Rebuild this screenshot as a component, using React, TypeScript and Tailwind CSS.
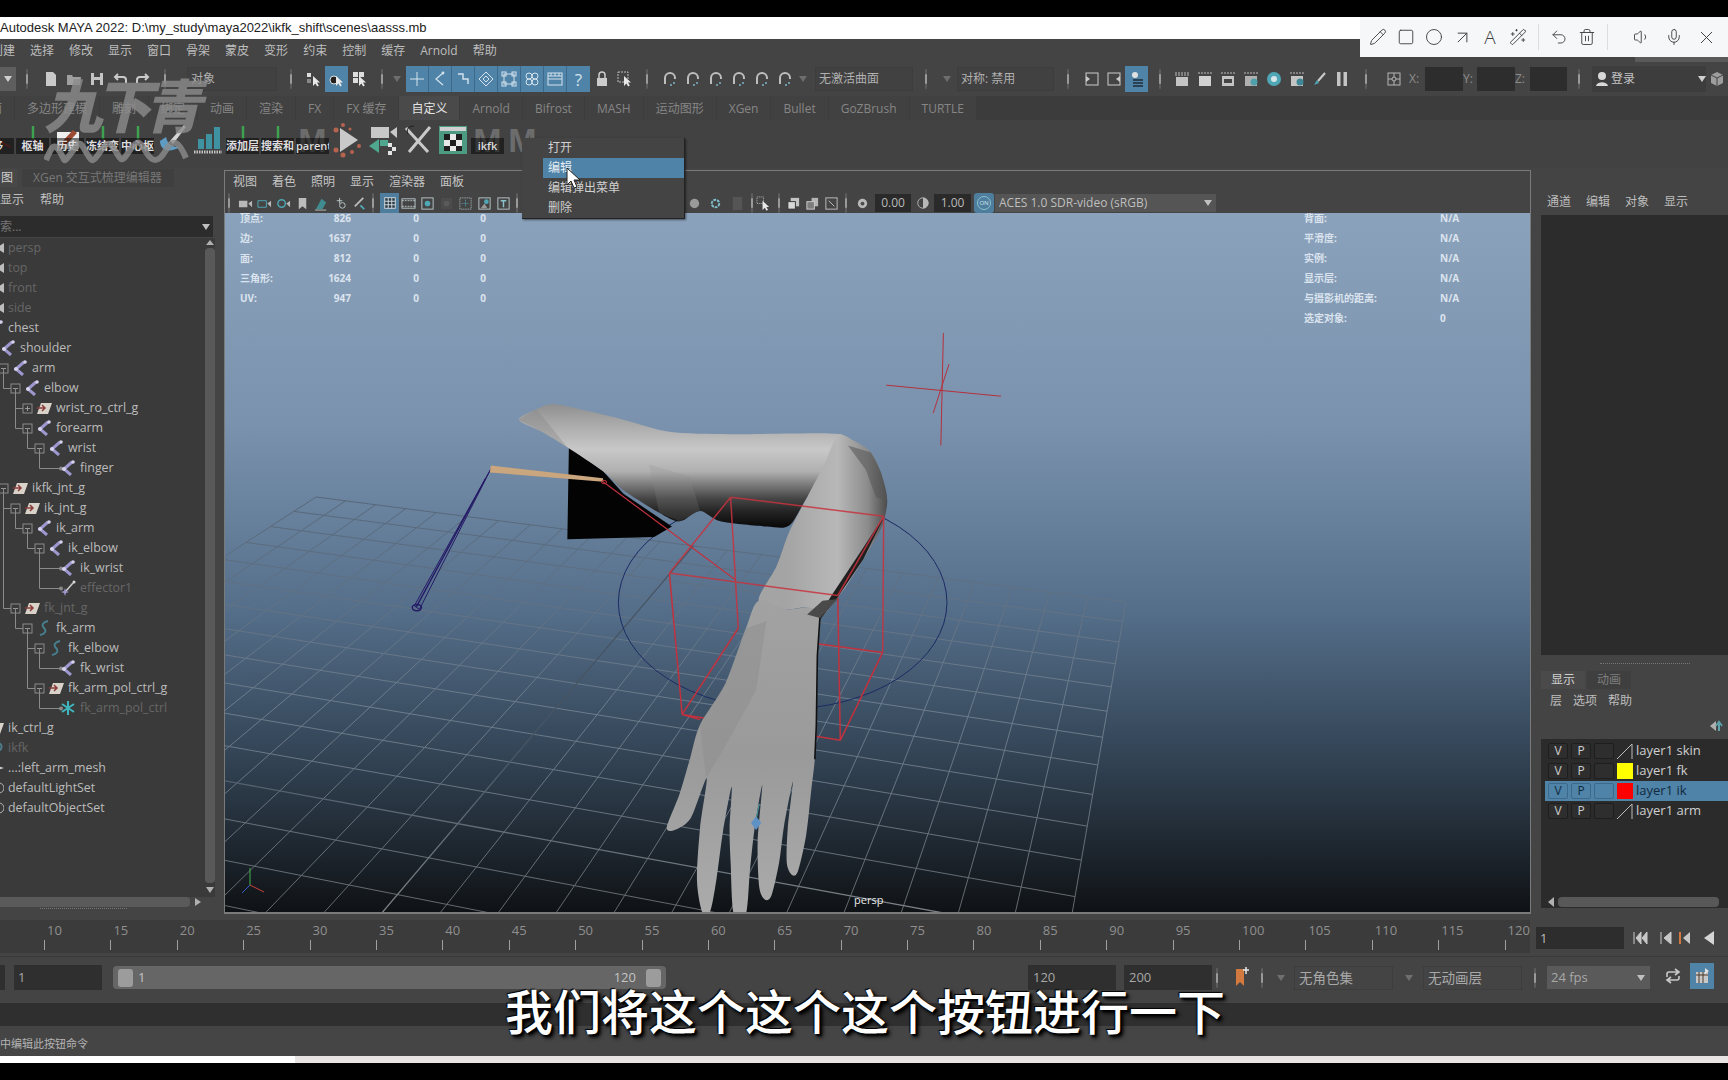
import type { ReactNode } from "react";
import { ArrowUpRight, Circle, Mic, Pencil, Square, Trash2, Undo2, Volume1, WandSparkles, X } from "lucide-react";

// small svg wrapper, every toolbar glyph is 16x16
function Ic({ children, s = 16 }: { children: ReactNode; s?: number }) {
  return (
    <svg width={s} height={s} viewBox="0 0 16 16" fill="none" className="shrink-0">
      {children}
    </svg>
  );
}

function Sep() {
  return (
    <div className="w-[2px] h-[20px] shrink-0 flex items-center justify-center bg-[#5c5c5c] rounded-full">
      <div className="w-[2px] h-[10px] bg-[#9a9a9a] rounded-full" />
    </div>
  );
}

function Caret({ c = "#8a8a8a" }: { c?: string }) {
  return (
    <svg width="8" height="6" viewBox="0 0 8 6" className="shrink-0">
      <path d="M0 0h8L4 6z" fill={c} />
    </svg>
  );
}

const arrow = <path d="M7 5v10l2.4-2.4 1.8 3 1.6-1-1.8-3H14z" fill="#e8e8e8" />;

const sel1 = <Ic><rect x="1" y="2" width="4" height="4" fill="#ddd" /><rect x="1" y="8" width="4" height="4" fill="#888" />{arrow}</Ic>;
const sel2 = <Ic><circle cx="5" cy="9" r="4" fill="#222" stroke="#ddd" />{arrow}</Ic>;
const sel3 = <Ic><rect x="1" y="1" width="5" height="5" fill="#ddd" /><rect x="7" y="1" width="5" height="5" fill="#ddd" /><rect x="1" y="7" width="5" height="5" fill="#ddd" />{arrow}</Ic>;
const magnet = (
  <Ic>
    <path d="M3 13V7a5 5 0 0 1 10 0v1" stroke="#bdbdbd" strokeWidth="2" />
    <circle cx="12" cy="12" r="1" fill="#7fb6c8" />
    <circle cx="9" cy="14" r="1" fill="#7fb6c8" />
  </Ic>
);
const clap = (
  <Ic>
    <path d="M1 2h14M1 4h14" stroke="#bbb" strokeDasharray="2 1" />
    <rect x="2" y="6" width="12" height="9" fill="#c4c4c4" />
  </Ic>
);

function Cell({ children, w = "w-[23px]", on }: { children?: ReactNode; w?: string; on?: boolean }) {
  return (
    <div className={`${w} h-[26px] shrink-0 flex items-center justify-center ${on ? "bg-[#4f83a8]" : ""}`}>
      {children}
    </div>
  );
}

function Combo({ t, w }: { t: string; w: string }) {
  return (
    <div className={`${w} h-[24px] shrink-0 flex items-center pl-[3px] text-[12px] text-[#b0b0b0] border border-[#3d3d3d] bg-[#414141]`}>
      {t}
    </div>
  );
}

function MainToolbar() {
  const lineIc = "#d5e4ee";
  return (
    <div className="h-[34px] bg-[#444444] flex items-center">
      <div className="w-[16px] h-[24px] shrink-0 bg-[#5e5e5e] flex items-center justify-center"><Caret c="#cfcfcf" /></div>
      <div className="ml-[10px]"><Sep /></div>
      <div className="ml-[11px] flex">
        <Cell><Ic><path d="M3 1h7l3 3v11H3z" fill="#c9c9c9" /></Ic></Cell>
        <Cell><Ic><path d="M1 4h5l1 2h8l-1 8H1z" fill="#9f9f9f" /></Ic></Cell>
        <Cell><Ic><path d="M2 2h12v12H2z" fill="#c4c4c4" /><rect x="5" y="2" width="6" height="4" fill="#444" /><rect x="5" y="9" width="6" height="5" fill="#444" /></Ic></Cell>
        <Cell><Ic><path d="M14 12V9a3 3 0 0 0-3-3H3M6 3L3 6l3 3" stroke="#c9c9c9" strokeWidth="2" /></Ic></Cell>
        <Cell><Ic><path d="M2 12V9a3 3 0 0 1 3-3h8M10 3l3 3-3 3" stroke="#c9c9c9" strokeWidth="2" /></Ic></Cell>
      </div>
      <div className="ml-[10px]"><Sep /></div>
      <div className="ml-[21px]"><Combo t="对象" w="w-[90px]" /></div>
      <div className="ml-[13px]"><Sep /></div>
      <div className="ml-[10px] flex">
        <Cell>{sel1}</Cell>
        <Cell on>{sel2}</Cell>
        <Cell>{sel3}</Cell>
      </div>
      <div className="ml-[10px]"><Sep /></div>
      <div className="ml-[10px]"><Caret c="#6d6d6d" /></div>
      <div className="ml-[5px] flex w-[184px] bg-[#4f83a8] divide-x divide-[#3d6a8a]">
        <Cell><Ic><path d="M8 1v14M1 8h14" stroke={lineIc} /></Ic></Cell>
        <Cell><Ic><path d="M11 2L4 8l7 6" stroke={lineIc} strokeWidth="1.2" /><circle cx="11" cy="2" r="1.4" fill={lineIc} /></Ic></Cell>
        <Cell><Ic><path d="M3 3h5v5h5v5" stroke={lineIc} strokeWidth="1.4" /></Ic></Cell>
        <Cell><Ic><path d="M8 1l7 7-7 7-7-7z M8 5l3 3-3 3-3-3z" stroke={lineIc} /></Ic></Cell>
        <Cell><Ic><rect x="3" y="3" width="10" height="10" stroke={lineIc} /><rect x="1" y="1" width="4" height="4" stroke={lineIc} /><rect x="11" y="1" width="4" height="4" stroke={lineIc} /><rect x="1" y="11" width="4" height="4" stroke={lineIc} /><rect x="11" y="11" width="4" height="4" stroke={lineIc} /></Ic></Cell>
        <Cell><Ic><circle cx="5" cy="5" r="3" stroke={lineIc} /><circle cx="11" cy="5" r="3" stroke={lineIc} /><circle cx="5" cy="11" r="3" stroke={lineIc} /><circle cx="11" cy="11" r="3" stroke={lineIc} /></Ic></Cell>
        <Cell><Ic><rect x="1" y="2" width="14" height="12" stroke={lineIc} /><path d="M1 5h14M1 8h14M4 2v3M8 2v3M12 2v3" stroke={lineIc} /></Ic></Cell>
        <Cell><span className="text-[17px] leading-none text-[#d5e4ee]">?</span></Cell>
      </div>
      <Cell><Ic><path d="M5 7V4a3 3 0 0 1 6 0v3" stroke="#ccc" strokeWidth="1.5" /><rect x="3" y="7" width="10" height="8" fill="#ccc" /></Ic></Cell>
      <Cell><Ic><rect x="1" y="1" width="10" height="10" stroke="#bbb" strokeDasharray="2 1" />{arrow}</Ic></Cell>
      <div className="ml-[10px]"><Sep /></div>
      <div className="ml-[10px] flex">
        <Cell>{magnet}</Cell><Cell>{magnet}</Cell><Cell>{magnet}</Cell><Cell>{magnet}</Cell><Cell>{magnet}</Cell><Cell>{magnet}</Cell>
      </div>
      <div className="ml-[3px]"><Caret c="#6d6d6d" /></div>
      <div className="ml-[8px]"><Combo t="无激活曲面" w="w-[98px]" /></div>
      <div className="ml-[12px]"><Sep /></div>
      <div className="ml-[16px]"><Caret c="#6d6d6d" /></div>
      <div className="ml-[6px]"><Combo t="对称: 禁用" w="w-[97px]" /></div>
      <div className="ml-[13px]"><Sep /></div>
      <div className="ml-[12px] flex">
        <Cell w="w-[22px]"><Ic><rect x="2" y="2" width="12" height="12" stroke="#ccc" /><path d="M2 5l4 3-4 3z" fill="#ccc" /></Ic></Cell>
        <Cell w="w-[22px]"><Ic><rect x="2" y="2" width="12" height="12" stroke="#ccc" /><path d="M14 5l-4 3 4 3z" fill="#ccc" /></Ic></Cell>
        <Cell on><Ic><circle cx="6" cy="4" r="3" fill="#e0e0e0" /><path d="M4 9h10M4 12h10M4 15h10" stroke="#1e2c36" strokeWidth="1.5" /></Ic></Cell>
      </div>
      <div className="ml-[11px]"><Sep /></div>
      <div className="ml-[9px] flex">
        <Cell>{clap}</Cell>
        <Cell><Ic><path d="M1 2h14" stroke="#bbb" strokeDasharray="2 1" /><rect x="2" y="5" width="12" height="10" fill="#d0d0d0" /></Ic></Cell>
        <Cell><Ic><path d="M1 2h14" stroke="#bbb" strokeDasharray="2 1" /><rect x="2" y="5" width="12" height="10" fill="#c4c4c4" /><rect x="4" y="8" width="8" height="4" fill="#444" /></Ic></Cell>
        <Cell><Ic><path d="M1 2h14" stroke="#bbb" strokeDasharray="2 1" /><rect x="2" y="5" width="12" height="10" fill="#b0b0b0" /><circle cx="11" cy="11" r="3.5" fill="#4fa0ab" /></Ic></Cell>
        <Cell><Ic><circle cx="8" cy="8" r="7" fill="#4fa7b5" /><circle cx="8" cy="8" r="3" fill="#d7e6ea" /></Ic></Cell>
        <Cell><Ic><path d="M1 2h14" stroke="#bbb" strokeDasharray="2 1" /><rect x="2" y="5" width="12" height="10" fill="#c4c4c4" /><circle cx="11" cy="11" r="3.5" fill="#3f8796" /></Ic></Cell>
        <Cell><Ic><path d="M13 2L6 10" stroke="#ccc" strokeWidth="2" /><path d="M5 9l-3 5 5-2z" fill="#4fa7b5" /></Ic></Cell>
        <Cell w="w-[22px]"><Ic><rect x="3" y="1" width="3.5" height="14" fill="#c4c4c4" /><rect x="9.5" y="1" width="3.5" height="14" fill="#c4c4c4" /></Ic></Cell>
      </div>
      <div className="ml-[12px]"><Sep /></div>
      <div className="ml-[16px]">
        <Cell w="w-[22px]"><Ic><rect x="2" y="2" width="12" height="12" stroke="#b5b5b5" /><path d="M8 2v12M2 8h12" stroke="#b5b5b5" /><circle cx="8" cy="8" r="2" fill="#444" stroke="#b5b5b5" /></Ic></Cell>
      </div>
      <div className="ml-[4px] w-[16px] shrink-0 text-[12px] text-[#8c8c8c]">X:</div>
      <div className="w-[38px] h-[24px] shrink-0 bg-[#2d2d2d]" />
      <div className="w-[14px] shrink-0 text-[12px] text-[#8c8c8c]">Y:</div>
      <div className="w-[38px] h-[24px] shrink-0 bg-[#2d2d2d]" />
      <div className="w-[15px] shrink-0 text-[12px] text-[#8c8c8c]">Z:</div>
      <div className="w-[37px] h-[24px] shrink-0 bg-[#2d2d2d]" />
      <div className="ml-[11px]"><Sep /></div>
      <div className="ml-[12px] w-[114px] h-[26px] shrink-0 bg-[#3d3d3d] flex items-center pl-[2px] gap-[1px] text-[12px] text-[#c4c4c4]">
        <Ic><circle cx="8" cy="5" r="4" fill="#d8d8d8" /><path d="M2 15c1-5 11-5 12 0z" fill="#d8d8d8" /></Ic>
        登录
        <div className="ml-auto"><Caret c="#d0d0d0" /></div>
      </div>
      <div className="w-[22px] shrink-0 flex items-center justify-center">
        <Ic><path d="M8 1l6 3v8l-6 3-6-3V4z" fill="#9d9d9d" /><path d="M8 7v8M2 4l6 3 6-3" stroke="#444" /></Ic>
      </div>
    </div>
  );
}

const TABS = ["曲面", "多边形建模", "雕刻", "绑定", "动画", "渲染", "FX", "FX 缓存", "自定义", "Arnold", "Bifrost", "MASH", "运动图形", "XGen", "Bullet", "GoZBrush", "TURTLE"];

function ShelfTabs() {
  return (
    <div className="h-[24px] bg-[#3c3c3c] flex gap-px overflow-hidden text-[12px]">
      <div className="flex gap-px -ml-[34px]">
        {TABS.map((t) => (
          <div
            key={t}
            className={`px-[12px] pt-[2px] flex items-center whitespace-nowrap ${t === "自定义" ? "bg-[#4a4a4a] text-[#e2e2e2]" : "bg-[#414141] text-[#868686]"}`}
          >
            {t}
          </div>
        ))}
      </div>
    </div>
  );
}

const gizmo = (
  <svg width="32" height="30" viewBox="0 0 32 30">
    <path d="M16 1v14" stroke="#3ea24e" strokeWidth="2.5" />
    <path d="M16 15L4 22" stroke="#3a3f9a" strokeWidth="1.5" />
    <path d="M16 15l12 7" stroke="#a33030" strokeWidth="1.5" />
  </svg>
);

const mLetter = <span className="text-[34px] leading-none font-bold text-[#6c6c6c] [font-family:'Liberation_Sans',sans-serif]">M</span>;

const SHELF: { label?: string; icon: ReactNode }[] = [
  { label: "移", icon: gizmo },
  { label: "枢轴", icon: gizmo },
  {
    label: "历史",
    icon: (
      <svg width="24" height="24" viewBox="0 0 24 24">
        <rect x="1" y="4" width="22" height="17" fill="#efefef" />
        <path d="M17 2l4 3-12 13-5 2 1-5z" fill="#9c4a33" />
      </svg>
    ),
  },
  { label: "冻结变换", icon: gizmo },
  { label: "中心枢轴", icon: gizmo },
  {
    icon: (
      <svg width="30" height="34" viewBox="0 0 30 34">
        <path d="M2 18c0 10 10 12 20 6-8 0-12-2-14-10z" fill="#5f9cc4" />
        <path d="M26 2L12 18l3 3L28 4z" fill="#d6d6d6" />
      </svg>
    ),
  },
  {
    icon: (
      <svg width="28" height="30" viewBox="0 0 28 30">
        <rect x="4" y="14" width="6" height="10" fill="#3f93a0" />
        <rect x="12" y="9" width="6" height="15" fill="#3f93a0" />
        <rect x="20" y="2" width="6" height="22" fill="#3f93a0" />
        <path d="M0 27h28" stroke="#c4c4c4" strokeWidth="3" strokeDasharray="1.5 1" />
      </svg>
    ),
  },
  { label: "添加层次", icon: gizmo },
  { label: "搜索和替", icon: gizmo },
  { label: "parent", icon: mLetter },
  {
    icon: (
      <svg width="32" height="36" viewBox="0 0 32 36">
        <path d="M8 6l18 12L8 30z" fill="#c9c9c9" />
        <g fill="#b5634e">
          <circle cx="4" cy="8" r="2.5" /><circle cx="11" cy="3" r="2" /><circle cx="18" cy="7" r="1.5" /><circle cx="4" cy="28" r="2.5" /><circle cx="11" cy="33" r="2.5" /><circle cx="20" cy="30" r="2" /><circle cx="27" cy="24" r="2" />
        </g>
      </svg>
    ),
  },
  {
    icon: (
      <svg width="32" height="32" viewBox="0 0 32 32">
        <rect x="4" y="3" width="18" height="11" fill="#c8c8c8" />
        <path d="M23 8l7-5v11z" fill="#c8c8c8" />
        <path d="M2 22l10-7v14z" fill="#4fa78f" />
        <rect x="13" y="16" width="8" height="6" fill="#4fa78f" />
        <path d="M21 19h4v4h-4zM25 23h4v4h-4zM21 27h4v4h-4z" fill="#e4e4e4" />
      </svg>
    ),
  },
  {
    icon: (
      <svg width="32" height="32" viewBox="0 0 32 32">
        <path d="M28 3L7 28M4 4l22 24" stroke="#c9c9c9" strokeWidth="3" />
        <path d="M12 2c-6 0-8 4-6 8" stroke="#1e1e1e" fill="none" />
      </svg>
    ),
  },
  {
    icon: (
      <svg width="28" height="28" viewBox="0 0 28 28">
        <rect width="28" height="28" fill="#4d9a83" />
        <rect x="1" y="1" width="26" height="4" fill="#d0d0d0" />
        <rect x="5" y="8" width="18" height="17" fill="#e8e8e8" />
        <path d="M5 8h6v6H5zM17 8h6v6h-6zM11 14h6v6h-6zM5 20h6v5H5zM17 20h6v5h-6z" fill="#1e1e1e" />
      </svg>
    ),
  },
  { label: "ikfk", icon: mLetter },
  { icon: mLetter },
];

function Shelf() {
  return (
    <div className="h-[48px] bg-[#424242] flex overflow-hidden relative">
      <div className="flex -ml-[20px]">
        {SHELF.map((s, i) => (
          <div key={i} className="w-[35px] h-full shrink-0 relative flex justify-center pt-[3px]">
            <div className="h-[34px] flex items-center justify-center">{s.icon}</div>
            {s.label && (
              <div className={`absolute left-[1px] right-[1px] top-[18px] h-[16px] bg-[#000000]/50 overflow-hidden text-[11px] leading-[16px] text-[#dddddd] whitespace-nowrap font-semibold ${s.label.length > 2 && s.label !== "ikfk" ? "text-left" : "text-center"}`}>
                {s.label}
              </div>
            )}
          </div>
        ))}
      </div>
    </div>
  );
}

// outliner -----------------------------------------------------------------
type Kind = "cam" | "joint" | "group" | "eff" | "curve" | "star" | "q" | "mesh" | "set";
type Node = { t: string; d: number; k: Kind; dim?: boolean; plus?: boolean };

const TREE: Node[] = [
  { t: "persp", d: 0, k: "cam", dim: true },
  { t: "top", d: 0, k: "cam", dim: true },
  { t: "front", d: 0, k: "cam", dim: true },
  { t: "side", d: 0, k: "cam", dim: true },
  { t: "chest", d: 0, k: "joint" },
  { t: "shoulder", d: 1, k: "joint" },
  { t: "arm", d: 2, k: "joint" },
  { t: "elbow", d: 3, k: "joint" },
  { t: "wrist_ro_ctrl_g", d: 4, k: "group", plus: true },
  { t: "forearm", d: 4, k: "joint" },
  { t: "wrist", d: 5, k: "joint" },
  { t: "finger", d: 6, k: "joint" },
  { t: "ikfk_jnt_g", d: 2, k: "group" },
  { t: "ik_jnt_g", d: 3, k: "group" },
  { t: "ik_arm", d: 4, k: "joint" },
  { t: "ik_elbow", d: 5, k: "joint" },
  { t: "ik_wrist", d: 6, k: "joint" },
  { t: "effector1", d: 6, k: "eff", dim: true },
  { t: "fk_jnt_g", d: 3, k: "group", dim: true },
  { t: "fk_arm", d: 4, k: "curve" },
  { t: "fk_elbow", d: 5, k: "curve" },
  { t: "fk_wrist", d: 6, k: "joint" },
  { t: "fk_arm_pol_ctrl_g", d: 5, k: "group" },
  { t: "fk_arm_pol_ctrl", d: 6, k: "star", dim: true },
  { t: "ik_ctrl_g", d: 0, k: "group" },
  { t: "ikfk", d: 0, k: "q", dim: true },
  { t: "...:left_arm_mesh", d: 0, k: "mesh" },
  { t: "defaultLightSet", d: 0, k: "set" },
  { t: "defaultObjectSet", d: 0, k: "set" },
];

function TreeIcon({ k }: { k: Kind }) {
  switch (k) {
    case "cam":
      return <path d="M8 8l8-5v10z" fill="#bdbdbd" />;
    case "joint":
      return (
        <g>
          <path d="M12 2L4 9l7 6" stroke="#9d97cf" strokeWidth="3" />
          <circle cx="13" cy="2" r="1.8" fill="#d6d3ec" />
          <circle cx="4" cy="9" r="2" fill="#d6d3ec" />
        </g>
      );
    case "group":
      return (
        <g>
          <path d="M5 3h11l-4 11H1z" fill="#d9d2c8" />
          <path d="M1 8h8M6 5l3 3-3 3" stroke="#8a3d3d" strokeWidth="1.5" />
        </g>
      );
    case "eff":
      return (
        <g>
          <path d="M13 3L6 11" stroke="#cfcfcf" strokeWidth="1.5" />
          <circle cx="14" cy="2" r="1.5" fill="#ddd" />
          <path d="M5 8l1 3 3 1-3 1-1 3-1-3-3-1 3-1z" fill="#9d97cf" />
        </g>
      );
    case "curve":
      return <path d="M12 1c-5 1-7 4-4 7s1 6-4 7" stroke="#46808f" strokeWidth="1.8" />;
    case "star":
      return <path d="M8 1v14M2 4l12 8M14 4L2 12" stroke="#3db6bd" strokeWidth="2" />;
    case "q":
      return <path d="M11 3c4 2 3 7-1 8" stroke="#4d7d8d" strokeWidth="2" />;
    case "mesh":
      return <path d="M10 6l6 2-6 2z" fill="#d0d0d0" />;
    case "set":
      return <circle cx="11" cy="8" r="5" stroke="#b5b5b5" />;
  }
}

const textX = (d: number) => 8 + 12 * d;
const expX = (d: number) => textX(d) - 29;
const rowY = (i: number) => i * 20 + 10;

// tree guide lines and the +/- boxes all live in one drawing
function TreeLines() {
  const parts: ReactNode[] = [];
  TREE.forEach((n, i) => {
    const hasKids = TREE[i + 1] && TREE[i + 1].d > n.d;
    const y = rowY(i);
    if (n.d > 0) {
      let p = i - 1;
      while (p >= 0 && TREE[p].d !== n.d - 1) p--;
      const px = expX(n.d - 1) + 0.5;
      parts.push(<path key={`l${i}`} d={`M${px} ${rowY(p)}V${y + 0.5}H${hasKids || n.plus ? expX(n.d) : expX(n.d) + 9}`} stroke="#8a8a8a" />);
    }
    if (n.d > 0 && !hasKids && !n.plus) {
      parts.push(<circle key={`d${i}`} cx={expX(n.d) + 10} cy={y + 0.5} r="2" fill="#8a8a8a" />);
    }
    if (hasKids || n.plus) {
      const ex = expX(n.d);
      parts.push(
        <g key={`b${i}`}>
          <rect x={ex - 4} y={y - 4} width="9" height="9" fill="#3a3a3a" stroke="#8a8a8a" />
          <path d={`M${ex - 2} ${y + 0.5}h5`} stroke="#9a9a9a" />
          {n.plus && <path d={`M${ex + 0.5} ${y - 2}v5`} stroke="#9a9a9a" />}
        </g>
      );
    }
  });
  return (
    <svg className="absolute left-0 top-0" width="110" height="600" fill="none">
      {parts}
    </svg>
  );
}

function Outliner() {
  return (
    <div className="w-[222px] shrink-0 flex flex-col">
      <div className="h-[18px] mt-[1px] flex items-end text-[12px]">
        <div className="w-[17px] h-[18px] bg-[#484848] text-[#cfcfcf] leading-[18px] pl-[1px]">图</div>
        <div className="ml-[5px] w-[152px] h-[18px] bg-[#3f3f3f] text-[#777777] leading-[18px] pl-[11px]">XGen 交互式梳理编辑器</div>
      </div>
      <div className="h-[29px] pb-[3px] flex items-center gap-[16px] text-[12px] text-[#c0c0c0]">
        <span>显示</span>
        <span>帮助</span>
      </div>
      <div className="h-[21px] w-[213px] bg-[#2c2c2c] flex items-center justify-between pr-[3px] text-[12px] text-[#777777]">
        <span>索...</span>
        <Caret c="#c0c0c0" />
      </div>
      <div className="h-[1px]" />
      <div className="h-[659px] flex">
        <div className="relative w-[205px] bg-[#3a3a3a] overflow-hidden text-[12.4px]">
          <TreeLines />
          {TREE.map((n) => (
            <div key={n.t} className="h-[20px] flex items-center relative" style={{ marginLeft: textX(n.d) - 20 }}>
              <Ic><TreeIcon k={n.k} /></Ic>
              <span className={`ml-[4px] whitespace-nowrap ${n.dim ? "text-[#666666]" : "text-[#bcbcbc]"}`}>{n.t}</span>
            </div>
          ))}
        </div>
        <div className="w-[10px] h-[659px] bg-[#3a3a3a] flex flex-col items-center">
          <svg width="10" height="10" viewBox="0 0 10 10" className="shrink-0"><path d="M5 2l4 5H1z" fill="#b0b0b0" /></svg>
          <div className="flex-1 w-[10px] bg-[#595959] rounded-[4px]" />
          <svg width="10" height="14" viewBox="0 0 10 14" className="shrink-0"><path d="M5 10L1 4h8z" fill="#b0b0b0" /></svg>
        </div>
      </div>
      <div className="h-[10px] w-[215px] flex items-center">
        <div className="w-[190px] h-[10px] bg-[#5a5a5a] rounded-r-[4px]" />
        <svg width="10" height="10" viewBox="0 0 10 10" className="ml-[3px]"><path d="M2 1l6 4-6 4z" fill="#b0b0b0" /></svg>
      </div>
      <div className="ml-[40px] mt-[1px] w-[87px] border-t border-dotted border-[#777777]" />
    </div>
  );
}

// viewport -------------------------------------------------------------------
function homography(p: number[][]) {
  const [[x0, y0], [x1, y1], [x2, y2], [x3, y3]] = p;
  const dx1 = x1 - x2, dx2 = x3 - x2, dy1 = y1 - y2, dy2 = y3 - y2;
  const sx = x0 - x1 + x2 - x3, sy = y0 - y1 + y2 - y3;
  const den = dx1 * dy2 - dx2 * dy1;
  const g = (sx * dy2 - dx2 * sy) / den;
  const h = (dx1 * sy - sx * dy1) / den;
  const a = x1 - x0 + g * x1, b = x3 - x0 + h * x3;
  const d = y1 - y0 + g * y1, e = y3 - y0 + h * y3;
  return (u: number, v: number) => {
    const w = g * u + h * v + 1;
    return `${((a * u + b * v + x0) / w).toFixed(1)} ${((d * u + e * v + y0) / w).toFixed(1)}`;
  };
}

const P = homography([[317, 497], [1127, 602], [909, 1862], [-860, 1261]]);
const N = 24;
let gridD = "";
for (let i = 0; i <= N; i++) {
  if (i === N / 2) continue;
  const t = i / N;
  gridD += `M${P(t, 0)}L${P(t, 1)}M${P(0, t)}L${P(1, t)}`;
}
const axisD = `M${P(0.5, 0)}L${P(0.5, 1)}M${P(0, 0.5)}L${P(1, 0.5)}`;

// catmull-rom through the outline points, closes the shape
function smooth(pts: number[][]) {
  const n = pts.length;
  let d = `M${pts[0][0]} ${pts[0][1]}`;
  for (let i = 0; i < n; i++) {
    const p0 = pts[(i - 1 + n) % n], p1 = pts[i], p2 = pts[(i + 1) % n], p3 = pts[(i + 2) % n];
    const k = 0.14;
    d += `C${p1[0] + (p2[0] - p0[0]) * k} ${p1[1] + (p2[1] - p0[1]) * k} ${p2[0] - (p3[0] - p1[0]) * k} ${p2[1] - (p3[1] - p1[1]) * k} ${p2[0]} ${p2[1]}`;
  }
  return d + "Z";
}

const upperArm = smooth([[235, 115], [270, 85], [305, 70], [370, 90], [440, 115], [530, 150], [650, 157], [840, 155], [870, 165], [860, 210], [800, 340], [765, 422], [720, 425], [630, 410], [590, 380], [550, 410], [510, 385], [440, 320], [400, 265], [330, 195], [280, 150]]);
const elbow = smooth([[860, 160], [890, 175], [925, 210], [945, 270], [957, 350], [945, 430], [910, 520], [880, 590], [860, 630], [825, 690], [800, 660], [760, 665], [705, 640], [740, 540], [765, 440], [800, 340], [835, 240]]);
const forearm = smooth([[825, 690], [820, 800], [818, 1000], [815, 1100], [808, 1190], [798, 1320], [782, 1425], [770, 1435], [760, 1400], [762, 1300], [772, 1165], [755, 1290], [745, 1400], [730, 1495], [717, 1507], [706, 1470], [703, 1340], [712, 1175], [697, 1300], [688, 1420], [680, 1548], [656, 1548], [650, 1400], [648, 1300], [652, 1180], [635, 1310], [622, 1450], [610, 1540], [594, 1542], [584, 1450], [590, 1300], [603, 1155], [572, 1270], [540, 1305], [525, 1297], [550, 1200], [570, 1100], [590, 1000], [640, 880], [680, 720], [705, 640], [760, 665], [805, 660]]);

function Scene() {
  return (
    <svg className="absolute inset-0" width="1304" height="699" viewBox="226 213 1304 699" fill="none">
      <defs>
        <linearGradient id="gl" gradientUnits="userSpaceOnUse" x1="0" y1="500" x2="0" y2="912">
          <stop offset="0" stopColor="#566779" />
          <stop offset="0.5" stopColor="#6c7c8c" />
          <stop offset="1" stopColor="#63686d" />
        </linearGradient>
        <linearGradient id="ax" gradientUnits="userSpaceOnUse" x1="0" y1="500" x2="0" y2="912">
          <stop offset="0" stopColor="#465463" />
          <stop offset="0.6" stopColor="#465463" />
          <stop offset="1" stopColor="#7d8388" />
        </linearGradient>
        <linearGradient id="up" gradientUnits="userSpaceOnUse" x1="0" y1="70" x2="0" y2="425">
          <stop offset="0" stopColor="#8f8f8f" />
          <stop offset="0.1" stopColor="#a0a0a0" />
          <stop offset="0.37" stopColor="#c8c8c8" />
          <stop offset="0.55" stopColor="#b0b0b0" />
          <stop offset="0.66" stopColor="#7a7a7a" />
          <stop offset="0.77" stopColor="#464646" />
          <stop offset="0.88" stopColor="#232323" />
          <stop offset="1" stopColor="#0a0a0a" />
        </linearGradient>
        <linearGradient id="el" gradientUnits="userSpaceOnUse" x1="760" y1="0" x2="958" y2="0">
          <stop offset="0" stopColor="#a4a4a4" />
          <stop offset="0.5" stopColor="#b8b8b8" />
          <stop offset="0.8" stopColor="#8c8c8c" />
          <stop offset="1" stopColor="#4a4a4a" />
        </linearGradient>
        <linearGradient id="fo" gradientUnits="userSpaceOnUse" x1="0" y1="640" x2="0" y2="1548">
          <stop offset="0" stopColor="#a2a2a2" />
          <stop offset="0.5" stopColor="#9a9a9a" />
          <stop offset="1" stopColor="#ababab" />
        </linearGradient>
      </defs>

      <path d={gridD} stroke="url(#gl)" />
      <path d={axisD} stroke="url(#ax)" strokeWidth="1.3" />

      {/* rest of the drawing is in the coordinates of the zoom crop */}
      <g transform="translate(400 380) scale(0.5102 0.3448)">
        <ellipse cx="752" cy="645" rx="322" ry="310" stroke="#1b2a63" vectorEffect="non-scaling-stroke" />
        <path vectorEffect="non-scaling-stroke" d="M530 560L555 970M860 625L865 1045M555 970L865 1045M555 970L665 720M865 1045L948 790M820 765L948 790M555 970L590 985" stroke="#c1323e" strokeWidth="1.5" />
        <path d="M180 258L40 665L30 655Z" fill="none" stroke="#241a66" strokeWidth="1" vectorEffect="non-scaling-stroke" />
        <path d="M170 285L34 658" stroke="#241a66" strokeWidth="1.4" vectorEffect="non-scaling-stroke" />
        <circle cx="35" cy="660" r="9" stroke="#241a66" strokeWidth="1.5" vectorEffect="non-scaling-stroke" />

        <path d="M333 195L330 462L500 455L535 425L440 330L400 265Z" fill="#030303" />
        <path d="M180 248L400 285L400 295L178 268Z" fill="#c9a67e" />
        <path d={upperArm} fill="url(#up)" />
        <path d="M490 245L570 280L590 380L550 410L510 385Z" fill="#8d8d8d" fillOpacity="0.2" />
        <path d="M235 115L270 85L330 195L280 150Z" fill="#8a8a8a" fillOpacity="0.4" />
        <path d={elbow} fill="url(#el)" />
        <path d="M880 190L925 210L945 270L957 350L935 340L915 260Z" fill="#565656" fillOpacity="0.55" />
        <path d="M950 400L910 520L860 630L825 695L820 690L850 620L895 520L935 430Z" fill="#1f1f1f" />
        <path d={forearm} fill="url(#fo)" />
        <path d="M680 720L720 700L700 900L640 1060L602 1155L590 1000L640 880Z" fill="#8e8e8e" fillOpacity="0.5" />
        <path d="M825 690L820 800L818 1000L815 1100" stroke="#111111" strokeWidth="1.6" vectorEffect="non-scaling-stroke" />
        <path d="M800 680L825 690L860 635L830 640Z" fill="#4a4a4a" />

        <path d="M400 295L660 580" stroke="#c1323e" strokeWidth="1.2" vectorEffect="non-scaling-stroke" />
        <path d="M650 340L950 395M650 340L530 560M950 395L860 625M530 560L860 625M650 340L665 720M950 395L948 790" stroke="#c8323e" strokeOpacity="0.85" strokeWidth="1.5" vectorEffect="non-scaling-stroke" />
        <circle cx="402" cy="296" r="5" stroke="#c1323e" vectorEffect="non-scaling-stroke" />
        <path d="M955 15L1180 47M1067 -136L1062 190M1078 -46L1047 96" stroke="#b5303c" vectorEffect="non-scaling-stroke" />
        <path d="M700 1265L710 1285L700 1305L690 1285Z" fill="#5f92c4" />
        <path d="M706 1230L701 1268" stroke="#4a9aa5" vectorEffect="non-scaling-stroke" />
      </g>

      <path d="M251 885v-17" stroke="#41b04f" />
      <path d="M251 885l14 7" stroke="#c8403a" />
      <path d="M251 885l-8 8" stroke="#3a58c8" />
    </svg>
  );
}

const LEFT_HUD = [
  ["顶点:", "826"],
  ["边:", "1637"],
  ["面:", "812"],
  ["三角形:", "1624"],
  ["UV:", "947"],
];
const RIGHT_HUD = [
  ["背面:", "N/A"],
  ["平滑度:", "N/A"],
  ["实例:", "N/A"],
  ["显示层:", "N/A"],
  ["与摄影机的距离:", "N/A"],
  ["选定对象:", "0"],
];

const vpIc = "#b9c6c9";

function VC({ children }: { children: ReactNode }) {
  return (
    <div className="w-[19px] h-[20px] shrink-0 flex items-center justify-center">
      <Ic s={15}>{children}</Ic>
    </div>
  );
}

function ViewportPanel() {
  return (
    <div className="w-[1307px] h-[744px] mt-[2px] ml-[2px] shrink-0 flex flex-col border-x border-t border-b-2 border-[#7a7a7a]">
      <div className="h-[22px] shrink-0 flex items-center gap-[15px] pl-[8px] text-[12px] text-[#c4c4c4]">
        <span>视图</span><span>着色</span><span>照明</span><span>显示</span><span>渲染器</span><span>面板</span>
      </div>
      <div className="h-[20px] shrink-0 flex items-center">
        <div className="ml-[3px]"><Sep /></div>
        <div className="ml-[6px] flex">
          <VC><path d="M1 5h9v7H1zM11 8l4-3v7z" fill="#b8b8b8" /></VC>
          <VC><path d="M1 5h9v7H1z" stroke="#4fa7b5" /><path d="M11 8l4-3v7z" fill="#b8b8b8" /></VC>
          <VC><circle cx="6" cy="8" r="4" stroke="#4fa7b5" strokeWidth="1.5" /><path d="M11 8l4-3v7z" fill="#b8b8b8" /></VC>
          <VC><path d="M4 2h8v12l-4-3-4 3z" fill="#bcbcbc" /></VC>
          <VC><path d="M2 14L8 3l5 4-4 7z" fill="#3f8b8f" /><path d="M1 15h12" stroke="#bbb" /></VC>
          <VC><circle cx="10" cy="10" r="3" stroke={vpIc} /><path d="M7 8V2M4 5h6" stroke={vpIc} /></VC>
          <VC><path d="M12 2L3 11" stroke="#bbb" strokeWidth="2" /><path d="M9 10l4 4" stroke="#4fa7b5" strokeWidth="2" /></VC>
        </div>
        <div className="ml-[3px]"><Sep /></div>
        <div className="ml-[6px] flex">
          <div className="w-[19px] h-[20px] bg-[#4f7d9e] flex items-center justify-center">
            <Ic s={14}><rect x="2" y="2" width="12" height="12" fill="#2c3b46" stroke="#dfe7ec" /><path d="M6 2v12M10 2v12M2 6h12M2 10h12" stroke="#dfe7ec" /></Ic>
          </div>
          <VC><rect x="1" y="3" width="14" height="10" stroke={vpIc} /><path d="M1 5h14M1 11h14" stroke={vpIc} strokeDasharray="2 1" /></VC>
          <VC><rect x="2" y="2" width="12" height="12" stroke={vpIc} /><circle cx="8" cy="8" r="3" fill="#4fa7b5" /></VC>
          <VC><rect x="2" y="2" width="12" height="12" fill="#4c4c4c" /><circle cx="8" cy="8" r="3" fill="#5a5a5a" /></VC>
          <VC><rect x="2" y="2" width="12" height="12" stroke={vpIc} strokeDasharray="1 1" /><path d="M8 4v8M4 8h8" stroke="#4fa7b5" strokeDasharray="1 1" /></VC>
          <VC><rect x="2" y="2" width="12" height="12" stroke={vpIc} /><path d="M4 13l4-5 3 5z" fill="#9a9a9a" /><circle cx="10" cy="6" r="2.5" fill="#4fa7b5" /></VC>
          <VC><rect x="2" y="2" width="12" height="12" stroke={vpIc} /><path d="M5 5h6M8 5v7" stroke="#8cc3cc" strokeWidth="1.5" /></VC>
        </div>
        <div className="ml-[3px]"><Sep /></div>
        <div className="ml-[167px] flex">
          <VC><circle cx="8" cy="8" r="5" fill="#9a9a9a" /></VC>
          <div className="ml-[2px]"><VC><circle cx="8" cy="8" r="4" stroke="#7fc0cc" strokeWidth="2" strokeDasharray="3 1" /></VC></div>
          <div className="ml-[3px]"><VC><rect x="3" y="1" width="10" height="14" fill="#555555" /></VC></div>
        </div>
        <div className="ml-[4px]"><Sep /></div>
        <div className="ml-[1px]"><VC><rect x="1" y="1" width="7" height="7" stroke="#bbb" strokeDasharray="1 1" />{arrow}</VC></div>
        <div className="ml-[5px]"><Sep /></div>
        <div className="ml-[4px] flex">
          <VC><rect x="5" y="2" width="9" height="9" fill="#c4c4c4" /><rect x="2" y="6" width="8" height="8" fill="#d8d8d8" stroke="#333" /></VC>
          <VC><rect x="7" y="2" width="7" height="9" fill="#b5b5b5" /><rect x="2" y="6" width="8" height="8" fill="#7d7d7d" stroke="#ccc" /></VC>
          <VC><rect x="2" y="2" width="12" height="12" stroke="#c0c0c0" /><path d="M5 5l6 6" stroke="#c0c0c0" /></VC>
        </div>
        <div className="ml-[4px]"><Sep /></div>
        <div className="ml-[6px]"><VC><circle cx="8" cy="8" r="5" fill="#b8b8b8" /><circle cx="8" cy="8" r="2" fill="#4a4a4a" /></VC></div>
        <div className="ml-[3px] w-[36px] h-[18px] bg-[#2a2a2a] text-[12px] leading-[18px] text-center text-[#b9b9b9]">0.00</div>
        <div className="ml-[2px] w-[20px] flex justify-center"><Ic s={14}><path d="M8 2a6 6 0 0 1 0 12z" fill="#b8b8b8" /><circle cx="8" cy="8" r="6" stroke="#b8b8b8" /></Ic></div>
        <div className="ml-[1px] w-[37px] h-[18px] bg-[#2a2a2a] text-[12px] leading-[18px] text-center text-[#b9b9b9]">1.00</div>
        <div className="ml-[3px] w-[20px] h-[20px] bg-[#4f7d9e] rounded-[3px] flex items-center justify-center">
          <div className="w-[14px] h-[14px] rounded-full border border-[#8cc3cc] text-[6px] leading-[12px] text-center text-[#cfe7ec]">ON</div>
        </div>
        <div className="ml-[1px] w-[221px] h-[18px] bg-[#555555] flex items-center justify-between pl-[4px] pr-[4px] text-[12px] text-[#bfbfbf]">
          <span>ACES 1.0 SDR-video (sRGB)</span>
          <Caret c="#c0c0c0" />
        </div>
      </div>
      <div className="flex-1 relative overflow-hidden bg-[linear-gradient(180deg,#8ba2bc_0%,#7a92ad_30%,#56708c_56%,#324354_78%,#0f1215_100%)]">
        <Scene />
        <div className="absolute left-[15px] -top-[5px] w-[260px] grid grid-cols-[71px_40px_68px_67px] auto-rows-[20px] items-center text-[10px] font-bold text-[#dbe4ee]">
          {LEFT_HUD.map(([a, b]) => (
            <div key={a} className="contents">
              <span>{a}</span>
              <span className="text-right">{b}</span>
              <span className="text-right">0</span>
              <span className="text-right">0</span>
            </div>
          ))}
        </div>
        <div className="absolute left-[1079px] -top-[5px] w-[180px] grid grid-cols-[136px_44px] auto-rows-[20px] items-center text-[10px] font-bold text-[#dbe4ee]">
          {RIGHT_HUD.map(([a, b]) => (
            <div key={a} className="contents">
              <span>{a}</span>
              <span>{b}</span>
            </div>
          ))}
        </div>
        <span className="absolute left-[629px] top-[679px] text-[11px] text-[#e8e8e8]">persp</span>
      </div>
    </div>
  );
}

// right side ---------------------------------------------------------------------
const LAYERS = [
  { n: "layer1 skin" },
  { n: "layer1 fk", c: "bg-[#ffff00]" },
  { n: "layer1 ik", c: "bg-[#ff0000]", on: true },
  { n: "layer1 arm" },
];

function Chip({ t, on }: { t?: string; on?: boolean }) {
  return (
    <div className={`w-[20px] h-[16px] shrink-0 flex items-center justify-center text-[12px] leading-none border rounded-[2px] ${on ? "bg-[#4f83a8] border-[#3d6a8a] text-[#102a3d]" : "bg-[#2e2e2e] border-[#1e1e1e] text-[#cfcfcf]"}`}>
      {t}
    </div>
  );
}

function RightPanel() {
  return (
    <div className="w-[187px] h-[750px] ml-[10px] shrink-0 flex flex-col text-[12px] text-[#bdbdbd]">
      <div className="h-[47px] shrink-0 flex items-center gap-[15px] pl-[6px] pt-[20px]">
        <span>通道</span><span>编辑</span><span>对象</span><span>显示</span>
      </div>
      <div className="h-[440px] shrink-0 bg-[#2c2c2c]" />
      <div className="h-[16px] shrink-0 flex items-center justify-center">
        <div className="ml-[20px] w-[90px] border-t border-dotted border-[#777777]" />
      </div>
      <div className="h-[18px] shrink-0 flex">
        <div className="w-[44px] bg-[#4a4a4a] text-[#d0d0d0] text-center leading-[18px]">显示</div>
        <div className="ml-[2px] w-[44px] bg-[#3f3f3f] text-[#7e7e7e] text-center leading-[18px]">动画</div>
      </div>
      <div className="h-[24px] shrink-0 flex items-center gap-[11px] pl-[9px]">
        <span>层</span><span>选项</span><span>帮助</span>
      </div>
      <div className="h-[26px] shrink-0 flex items-center justify-end">
        <svg width="18" height="12" viewBox="0 0 18 12"><path d="M0 6l6-5v10z" fill="#b0b0b0" /><path d="M9 11V4M6 6l3-4 3 4" stroke="#5fa3ad" strokeWidth="2" /></svg>
      </div>
      <div className="h-[169px] shrink-0 bg-[#2b2b2b] flex flex-col pt-[2px]">
        {LAYERS.map((l) => (
          <div key={l.n} className={`h-[20px] ml-[4px] pl-[3px] flex items-center gap-[3px] text-[13px] ${l.on ? "bg-[#4f83a8] text-[#102a3d]" : "text-[#cfcfcf]"}`}>
            <Chip t="V" on={l.on} />
            <Chip t="P" on={l.on} />
            <Chip on={l.on} />
            {l.c ? (
              <div className={`w-[16px] h-[16px] shrink-0 ${l.c}`} />
            ) : (
              <svg width="16" height="16" viewBox="0 0 16 16" className="shrink-0" fill="none"><path d="M0 16L15 1V16" stroke="#bdbdbd" /></svg>
            )}
            <span className="whitespace-nowrap">{l.n}</span>
          </div>
        ))}
        <div className="mt-auto mb-[1px] h-[10px] flex items-center pl-[6px]">
          <svg width="8" height="10" viewBox="0 0 8 10"><path d="M7 0L1 5l6 5z" fill="#b0b0b0" /></svg>
          <div className="ml-[3px] w-[161px] h-[10px] bg-[#585858] rounded-[4px]" />
        </div>
      </div>
    </div>
  );
}

// bottom -------------------------------------------------------------------------
const RULER = Array.from({ length: 23 }, (_, i) => 10 + i * 5);

function BottomBars() {
  return (
    <div className="flex flex-col bg-[#444444] text-[#a8a8a8]">
      <div className="h-[38px] shrink-0 flex">
        <div className="w-[1530px] h-[33px] mt-[2px] bg-[#3b3b3b] overflow-hidden flex pl-[44px]">
          {RULER.map((n) => (
            <div key={n} className="w-[66.4px] shrink-0 flex flex-col">
              <span className="h-[20px] pl-[3px] text-[13px] leading-[20px] text-[#8f8f8f]">{n}</span>
              <div className="w-px h-[10px] bg-[#a0a0a0]" />
            </div>
          ))}
        </div>
        <div className="ml-[6px] mt-[9px] w-[88px] h-[22px] bg-[#2d2d2d] pl-[4px] text-[13px] leading-[22px] text-[#b9b9b9]">1</div>
        <div className="ml-[8px] mt-[9px] flex gap-[3px] items-center h-[22px]">
          <Ic><path d="M2 2v12M9 2L4 8l5 6zM15 2l-5 6 5 6z" fill="#c8c8c8" stroke="#c8c8c8" /></Ic>
          <div className="w-[4px]" />
          <Ic><path d="M3 2v12M13 2L6 8l7 6z" fill="#c8c8c8" stroke="#c8c8c8" /></Ic>
          <Ic><path d="M3 2v12" stroke="#d2793f" strokeWidth="2" /><path d="M13 2L6 8l7 6z" fill="#c8c8c8" /></Ic>
          <div className="w-[2px]" />
          <Ic><path d="M13 1L3 8l10 7z" fill="#d5d5d5" /></Ic>
        </div>
      </div>
      <div className="h-[42px] shrink-0 flex items-start text-[13px] border-t border-[#3a3a3a]">
        <div className="w-[5px] h-[25px] mt-[8px] bg-[#2f2f2f]" />
        <div className="ml-[9px] mt-[8px] w-[88px] h-[25px] bg-[#2f2f2f] pl-[4px] leading-[25px]">1</div>
        <div className="ml-[11px] mt-[9px] w-[553px] h-[23px] bg-[#666666] rounded-[4px] flex items-center pl-[5px] pr-[5px] gap-[5px] text-[#c4c4c4]">
          <div className="w-[15px] h-[18px] bg-[#9c9c9c] rounded-[3px]" />
          <span>1</span>
          <span className="ml-auto">120</span>
          <div className="w-[15px] h-[18px] ml-[5px] bg-[#9c9c9c] rounded-[3px]" />
        </div>
        <div className="ml-[362px] mt-[8px] w-[88px] h-[25px] bg-[#2f2f2f] pl-[5px] leading-[25px]">120</div>
        <div className="ml-[8px] mt-[8px] w-[88px] h-[25px] bg-[#2f2f2f] pl-[5px] leading-[25px]">200</div>
        <div className="ml-[4px] mt-[11px]"><Sep /></div>
        <div className="ml-[16px] mt-[9px]">
          <svg width="16" height="22" viewBox="0 0 16 22"><path d="M2 3h8v17l-4-4-4 4z" fill="#d2793f" /><path d="M12 1v7M9 4h6" stroke="#e8e8e8" strokeWidth="1.5" /></svg>
        </div>
        <div className="ml-[11px] mt-[11px]"><Sep /></div>
        <div className="ml-[14px] mt-[18px]"><Caret c="#6f6f6f" /></div>
        <div className="ml-[9px] mt-[9px] w-[99px] h-[24px] border border-[#3d3d3d] pl-[4px] text-[13.5px] leading-[22px] text-[#a8a8a8]">无角色集</div>
        <div className="ml-[12px] mt-[18px]"><Caret c="#6f6f6f" /></div>
        <div className="ml-[10px] mt-[9px] w-[99px] h-[24px] border border-[#3d3d3d] pl-[4px] text-[13.5px] leading-[22px] text-[#a8a8a8]">无动画层</div>
        <div className="ml-[12px] mt-[11px]"><Sep /></div>
        <div className="ml-[11px] mt-[9px] w-[103px] h-[23px] bg-[#5a5a5a] flex items-center justify-between pl-[4px] pr-[5px] text-[#a8a8a8]">
          24 fps
          <Caret c="#c0c0c0" />
        </div>
        <div className="ml-[15px] mt-[11px]"><Ic><path d="M2 9V6a2 2 0 0 1 2-2h9M10 1l4 3-4 3M14 8v2a2 2 0 0 1-2 2H3M6 9l-4 3 4 3" stroke="#c8c8c8" strokeWidth="1.6" /></Ic></div>
        <div className="ml-[9px] mt-[6px] w-[24px] h-[26px] bg-[#4f83a8] flex items-center justify-center">
          <Ic><rect x="2" y="4" width="12" height="11" fill="#c8c8c8" /><path d="M2 7h12M5 4v11M9 4v11" stroke="#4a3a2a" /><path d="M11 0l4 3-4 3z" fill="#e0e0e0" /></Ic>
        </div>
      </div>
      <div className="h-[32px] shrink-0 pt-[5px]">
        <div className="h-[23px] bg-[#2f2f2f]" />
      </div>
      <div className="h-[26px] shrink-0 pt-[3px] flex items-center bg-[#454545] text-[11px] text-[#b4b4b4] whitespace-nowrap">
        <span>中编辑此按钮命令</span>
      </div>
    </div>
  );
}

function ContextMenu() {
  return (
    <div className="absolute left-[522px] top-[138px] w-[163px] h-[81px] bg-[#444444] border-r border-b border-[#222222] shadow-[1px_1px_2px_#00000080] flex flex-col justify-center text-[12px] text-[#d0d0d0]">
      <div className="h-[20px] pl-[26px] leading-[20px]">打开</div>
      <div className="h-[20px] ml-[21px] pl-[5px] leading-[20px] bg-[#4f83a8] text-[#e6eef4]">编辑</div>
      <div className="h-[20px] pl-[26px] leading-[20px]">编辑弹出菜单</div>
      <div className="h-[20px] pl-[26px] leading-[20px]">删除</div>
      <svg className="absolute left-[44px] top-[29px]" width="15" height="23" viewBox="0 0 15 23">
        <path d="M1 1v17l4-4 3 7 3-1-3-7h6z" fill="#ffffff" stroke="#222222" />
      </svg>
    </div>
  );
}

function AnnotateBar() {
  const i = { size: 18, strokeWidth: 1.2, color: "#3c3c3c" };
  const big = { size: 21, strokeWidth: 1.1, color: "#3c3c3c" };
  return (
    <>
      <div className="absolute right-0 top-[57px] w-[93px] h-[5px] bg-[#5a5a5a]" />
      <div className="absolute right-0 top-[17px] w-[368px] h-[40px] bg-[#f6f7f9] flex items-center pl-[9px] text-[#3c3c3c]">
        <div className="flex items-center gap-[10px]">
          <Pencil {...i} /><Square {...i} /><Circle {...i} />
          <div className="w-[18px] flex justify-center"><ArrowUpRight {...big} className="shrink-0" /></div>
          <span className="w-[18px] text-center text-[19px] font-light leading-none">A</span>
          <WandSparkles {...i} />
        </div>
        <div className="ml-[11px] w-px h-[26px] bg-[#dddddd]" />
        <div className="ml-[11px] flex items-center gap-[10px]"><Undo2 {...i} /><Trash2 {...i} /></div>
        <div className="ml-[11px] w-px h-[26px] bg-[#dddddd]" />
        <div className="ml-[25px] flex items-center gap-[14px]"><Volume1 {...i} /><Mic {...i} /><div className="w-[18px] flex justify-center"><X {...big} className="shrink-0" /></div></div>
      </div>
    </>
  );
}

function Watermark() {
  return (
    <div className="absolute left-[44px] top-[72px] w-[170px] h-[100px] text-[#8c8c8c] opacity-80 pointer-events-none">
      <div className="text-[58px] leading-[62px] font-black italic whitespace-nowrap tracking-[-8px] [font-family:'Noto_Sans_CJK_SC',sans-serif]">九下青</div>
      <svg className="absolute left-0 top-[64px]" width="150" height="28" viewBox="0 0 150 28" fill="none">
        <path d="M2 24c6-14 8-18 14-8s3 12 12 0 8-10 14 0 6 12 14 0 10-10 16 0 6 10 14-2 10-8 16 2 12 12 20-2 14-6 20 8" stroke="#8c8c8c" strokeWidth="6" />
      </svg>
    </div>
  );
}

const MENU = ["创建", "选择", "修改", "显示", "窗口", "骨架", "蒙皮", "变形", "约束", "控制", "缓存", "Arnold", "帮助"];

export default function App() {
  return (
    <div className="relative w-[1728px] h-[1080px] overflow-hidden bg-black flex flex-col [font-family:'Open_Sans','Noto_Sans_CJK_SC',sans-serif]">
      <div className="h-[17px] shrink-0 bg-black" />
      <div className="h-[22px] shrink-0 bg-white flex items-center text-[13px] text-[#222222] whitespace-nowrap [font-family:'Liberation_Sans','Noto_Sans_CJK_SC',sans-serif]">
        Autodesk MAYA 2022: D:\my_study\maya2022\ikfk_shift\scenes\aasss.mb
      </div>
      <div className="h-[23px] shrink-0 bg-[#444444] overflow-hidden">
        <div className="h-full flex items-center gap-[15px] -ml-[9px] text-[12px] text-[#bdbdbd]">
          {MENU.map((m) => (
            <span key={m}>{m}</span>
          ))}
        </div>
      </div>
      <MainToolbar />
      <ShelfTabs />
      <Shelf />
      <div className="h-[750px] shrink-0 flex bg-[#444444] overflow-hidden">
        <Outliner />
        <ViewportPanel />
        <RightPanel />
      </div>
      <BottomBars />
      <div className="h-[7px] shrink-0 flex">
        <div className="w-[295px] bg-white" />
        <div className="flex-1 bg-[#e9e4e4]" />
      </div>
      <div className="h-[17px] shrink-0 bg-black" />

      <AnnotateBar />
      <ContextMenu />
      <Watermark />
      <div className="absolute left-[505px] top-[980px] text-[48px] leading-[58px] font-medium text-white whitespace-nowrap [text-shadow:2px_2px_2px_#000,-1px_-1px_1px_#000,3px_3px_4px_#000] [font-family:'Noto_Sans_CJK_SC',sans-serif]">
        我们将这个这个这个按钮进行一下
      </div>
    </div>
  );
}
